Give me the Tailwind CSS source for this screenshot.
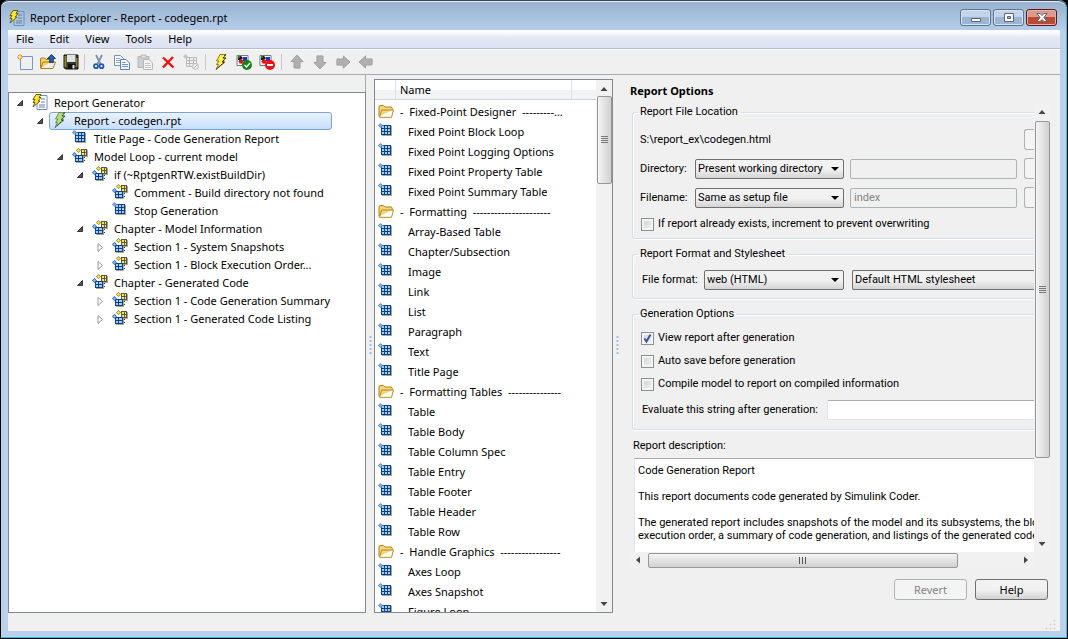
<!DOCTYPE html>
<html lang="en">
<head>
  <meta charset="UTF-8" />
  <title>Report Explorer - Report - codegen.rpt</title>
  <script src="https://cdn.jsdelivr.net/npm/@tailwindcss/browser@4"></script>
</head>
<body class="h-screen overflow-hidden bg-black font-['Noto_Sans',sans-serif] text-[11px] leading-4 text-black">

<!-- shared icons -->
<svg class="hidden">
  <defs>
    <linearGradient id="gFolder" x1="0" y1="0" x2="0" y2="1">
      <stop offset="0" stop-color="#fff3a8" /><stop offset="1" stop-color="#e9b83a" />
    </linearGradient>
    <linearGradient id="gPage" x1="0" y1="0" x2="1" y2="1">
      <stop offset="0" stop-color="#ffffff" /><stop offset="1" stop-color="#cfe0f5" />
    </linearGradient>
    <symbol id="grid" viewBox="0 0 16 16">
      <path d="M4 3h10v10H4z" fill="#a8a494" />
      <path d="M3 2h10v10H3z" fill="#123f80" />
      <path d="M4 3h2v2H4zM7 3h2v2H7zM10 3h2v2h-2zM4 6h2v2H4zM7 6h2v2H7zM10 6h2v2h-2zM4 9h2v2H4zM7 9h2v2H7zM10 9h2v2h-2z" fill="#9fd0fb" />
      <path d="M2.500 0L5 2.500 2.500 5 0 2.500z" fill="#2a62ad" stroke="#fff" stroke-width="0.400" />
      <path d="M2.500 1L4 2.500 2.500 4 1 2.500z" fill="#8cc4ff" />
    </symbol>
    <symbol id="group" viewBox="0 0 16 16">
      <path d="M10 2h6v7h-6zM4 8h8v7H4z" fill="#a8a494" />
      <path d="M9 1h6v7H9z" fill="#555" />
      <path d="M10 2h2v2h-2zM13 2h1v2h-1zM10 5h2v2h-2zM13 5h1v2h-1z" fill="#ffee35" />
      <path d="M6.500 0L9 2.500 6.500 5 4 2.500z" fill="#8a8432" />
      <path d="M6.500 0.900L8.100 2.500 6.500 4.100 4.900 2.500z" fill="#ffee35" />
      <path d="M3 7h8v7H3z" fill="#123f80" />
      <path d="M4 8h2v2H4zM7 8h3v2H7zM4 11h2v2H4zM7 11h3v2H7z" fill="#9fd0fb" />
      <path d="M2.500 4L5 6.500 2.500 9 0 6.500z" fill="#2a62ad" />
      <path d="M2.500 5L4 6.500 2.500 8 1 6.500z" fill="#8cc4ff" />
      <path d="M12 9h1v1h-1zM12 12h1v1h-1z" fill="#333" />
    </symbol>
    <symbol id="folder" viewBox="0 0 16 16">
      <path d="M1 13.500V4q0-1.500 1.500-1.500h3L7 4h6q1.200 0 1.200 1.200V7" fill="#f4d67a" stroke="#b08216" />
      <path d="M1.500 14.300L3.700 7H15.500L13.500 14.300z" fill="url(#gFolder)" stroke="#b98a1a" />
    </symbol>
    <symbol id="bolt" viewBox="0 0 16 16">
      <path d="M7 0.500h6L10.500 4H13L9.500 8H12L3 15.500 5.500 10.500H3.500L6 7H3.500z" fill="#fff04a" stroke="#8b7a1e" />
      <path d="M12.500 0.500L10 4h2.500L9 8h2.500L3.500 15" fill="none" stroke="#1c1a08" stroke-dasharray="2 1" />
    </symbol>
    <symbol id="boltsel" viewBox="0 0 16 16">
      <path d="M7 0.500h6L10.500 4H13L9.500 8H12L3 15.500 5.500 10.500H3.500L6 7H3.500z" fill="#b4dc7c" stroke="#6c8a62" />
      <path d="M12.500 0.500L10 4h2.500L9 8h2.500L3.500 15" fill="none" stroke="#26402c" stroke-dasharray="2 1" />
    </symbol>
    <symbol id="report" viewBox="0 0 16 16">
      <path d="M5 1.500h10v14H5z" fill="url(#gPage)" stroke="#6f8fb8" />
      <path d="M9 5h4M9 8h4M7 11h6M7 13h6" stroke="#6b7f9c" />
      <path d="M4 0.500h5L7 3.500h2L6 7h2L1 13 3 8.500H1L3 5.500H1z" fill="#ffe92e" stroke="#6e5b10" />
    </symbol>
    <symbol id="open" viewBox="0 0 16 16">
      <path d="M0.500 14V5q0-1 1-1h3L6 5.500h3.500V9" fill="#f3cf68" stroke="#b07e12" />
      <path d="M0.800 14.500L3 8h12.500L13 14.500z" fill="url(#gFolder)" stroke="#b07e12" />
      <path d="M11.500 0.500L15.500 4.500H13.300V8.500H9.700V4.500H7.500z" fill="#2a5ea5" stroke="#173a70" />
    </symbol>
    <symbol id="new" viewBox="0 0 16 16">
      <path d="M3.500 2.500h12v13h-12z" fill="url(#gPage)" stroke="#7397c6" />
      <path d="M3 0v6M0 3h6M1 1l4 4M5 1L1 5" stroke="#f09a3a" />
      <circle cx="3" cy="3" r="1.500" fill="#fff2c8" stroke="#f09a3a" stroke-width="0.500" />
    </symbol>
    <symbol id="save" viewBox="0 0 16 16">
      <path d="M1 1h14v14H2.500L1 13.500z" fill="#34342c" stroke="#111" />
      <path d="M4 1h8.500v7H4z" fill="#dfe3e8" />
      <path d="M1.500 2h2v11h-2zM13 4h1.500v9H13z" fill="#8a852a" />
      <path d="M5 10h7v5H5z" fill="#111" /><path d="M9.500 11h2v3.500h-2z" fill="#e8e8e8" />
    </symbol>
    <symbol id="cut" viewBox="0 0 16 16">
      <path d="M5 1l4.500 9M11 1L6.500 10" stroke="#7d92ac" stroke-width="1.800" fill="none" />
      <circle cx="5" cy="12.200" r="2" fill="none" stroke="#2459a8" stroke-width="1.800" />
      <circle cx="10.500" cy="12.200" r="2" fill="none" stroke="#2459a8" stroke-width="1.800" />
    </symbol>
    <symbol id="copy" viewBox="0 0 16 16">
      <path d="M0.500 1.500h6l3 3v7h-9z" fill="#f4f8fd" stroke="#7290bb" />
      <path d="M2 4.500h4M2 6.500h5M2 8.500h4" stroke="#8fa9cf" />
      <path d="M6.500 5.500h5.500l3.500 3.500v6.500h-9z" fill="#f4f8fd" stroke="#5f82b4" />
      <path d="M8 8.500h3.500M8 10.500h6M8 12.500h6" stroke="#7593c0" />
    </symbol>
    <symbol id="paste" viewBox="0 0 16 16">
      <path d="M1 2.500h11v11H1z" fill="#cfcfcf" stroke="#b5b5b5" />
      <path d="M4 1h5v3H4z" fill="#e6e6e6" stroke="#b5b5b5" />
      <path d="M6.500 5.500h5.500l3.500 3.500v6.500h-9z" fill="#f2f2f2" stroke="#b9b9b9" />
      <path d="M8 9.500h5M8 11.500h6M8 13.500h6" stroke="#c6c6c6" />
    </symbol>
    <symbol id="delete" viewBox="0 0 16 16">
      <path d="M3 3.500L13.500 13.500M13 3L3 13.500" stroke="#ee1111" stroke-width="2.400" fill="none" />
    </symbol>
    <symbol id="gridoff" viewBox="0 0 16 16">
      <path d="M3.500 3.500h10v9h-10zM3.500 6.500h10M3.500 9.500h10M6.500 3.500v9M10.500 3.500v9" stroke="#b9b9b9" fill="#efefef" />
      <path d="M2.500 0L5 2.500 2.500 5 0 2.500z" fill="#c4c4c4" />
      <circle cx="12.500" cy="12.500" r="3" fill="#efefef" stroke="#bdbdbd" /><path d="M10.500 14.500l4-4" stroke="#bdbdbd" />
    </symbol>
    <symbol id="model" viewBox="0 0 16 16">
      <path d="M1 1.500h11v10H1z" fill="#fff" stroke="#777" />
      <path d="M2 2h3l2 2-2 2H2z" fill="#161616" /><path d="M7 3h4v4H7z" fill="#2030c8" />
      <circle cx="5" cy="7.500" r="2.300" fill="#dd1515" /><path d="M2 2h2v2H2z" fill="#128a28" />
    </symbol>
    <symbol id="modelok" viewBox="0 0 16 16">
      <use href="#model" />
      <circle cx="11" cy="11" r="5" fill="#158215" /><path d="M8.500 11l2 2 3.500-4" stroke="#fff" stroke-width="1.500" fill="none" />
    </symbol>
    <symbol id="modelstop" viewBox="0 0 16 16">
      <use href="#model" />
      <circle cx="11" cy="11" r="5" fill="#ee1010" /><path d="M8 11h6" stroke="#fff" stroke-width="2" />
    </symbol>
    <symbol id="up" viewBox="0 0 16 16">
      <path d="M9 2l6 6.500h-3.500V15H6V8.500H3z" fill="#d6d6d6" />
      <path d="M8 1l6 6.500h-3V14H5V7.500H2z" fill="#b0b0b0" stroke="#a2a2a2" />
    </symbol>
  </defs>
</svg>

<div class="ml-px flex h-[calc(100vh-1px)] flex-col rounded-t-lg border-r border-b border-[#35bfe0] bg-[#b9d1ea] pr-[6px] pb-[6px] pl-[7px] mr-px">

  <!-- title bar -->
  <header class="-mr-[6px] -ml-[7px] flex h-[30px] shrink-0 items-center rounded-t-lg border-t border-[#3c4651] bg-linear-to-b from-[#98b2d0] to-[#b5cde8] pt-1 pr-[9px] pl-2 shadow-[inset_0_1px_0_#e5eef8]">
    <svg class="size-4 shrink-0"><use href="#report" /></svg>
    <h1 class="ml-[5px]">Report Explorer - Report - codegen.rpt</h1>
    <div class="ml-auto flex gap-[2px]">
      <button aria-label="Minimize" class="flex h-[17px] w-[31px] items-center justify-center rounded-[3px] border border-[#5c7290] bg-linear-to-b from-[#c3d4e8] from-50% to-[#9db5d0] to-50% shadow-[inset_0_0_0_1px_#d5e3f2]">
        <svg class="h-2.5 w-3" viewBox="0 0 12 10"><path d="M1.500 5.500h9v3h-9z" fill="#fff" stroke="#596478" /></svg>
      </button>
      <button aria-label="Maximize" class="flex h-[17px] w-[31px] items-center justify-center rounded-[3px] border border-[#5c7290] bg-linear-to-b from-[#c3d4e8] from-50% to-[#9db5d0] to-50% shadow-[inset_0_0_0_1px_#d5e3f2]">
        <svg class="h-2.5 w-3" viewBox="0 0 12 10"><path d="M1.500 0.500h9v8h-9z" fill="#fff" stroke="#596478" /><path d="M4.500 3.500h3v2h-3z" fill="#9db5d0" stroke="#596478" /></svg>
      </button>
      <button aria-label="Close" class="flex h-[17px] w-[31px] items-center justify-center rounded-[3px] border border-[#5a1a1e] bg-linear-to-b from-[#dc9a8c] from-50% to-[#bb4a34] to-50% shadow-[inset_0_0_0_1px_#e6b0a6]">
        <svg class="h-2.5 w-3" viewBox="0 0 12 10"><path d="M1 0.500h3L6 2.500 8 0.500h3L8 4.500 11 8.500H8L6 6.500 4 8.500H1L4 4.500z" fill="#fff" stroke="#596478" /></svg>
      </button>
    </div>
  </header>

  <div class="flex min-h-0 flex-1 flex-col bg-[#f0f0f0]">

    <!-- menu -->
    <nav class="flex h-[19px] shrink-0 items-center gap-4 border-b border-[#b6bccc] bg-linear-to-b from-white from-10% via-[#e4e9f4] via-40% to-[#dce2f3] px-2">
      <a href="#">File</a>
      <a href="#">Edit</a>
      <a href="#">View</a>
      <a href="#">Tools</a>
      <a href="#">Help</a>
    </nav>

    <!-- toolbar -->
    <div class="flex h-[26px] shrink-0 items-center border-t border-b border-t-white border-b-[#aaaaaa] pl-[5px]" role="toolbar">
      <button aria-label="New" class="flex w-[23px] justify-center"><svg class="size-4"><use href="#new" /></svg></button>
      <button aria-label="Open" class="flex w-[23px] justify-center"><svg class="size-4"><use href="#open" /></svg></button>
      <button aria-label="Save" class="flex w-[23px] justify-center"><svg class="size-4"><use href="#save" /></svg></button>
      <span class="mx-[2px] h-4 w-px bg-[#c8c8c8]"></span>
      <button aria-label="Cut" class="flex w-[23px] justify-center"><svg class="size-4"><use href="#cut" /></svg></button>
      <button aria-label="Copy" class="flex w-[23px] justify-center"><svg class="size-4"><use href="#copy" /></svg></button>
      <button aria-label="Paste" class="flex w-[23px] justify-center"><svg class="size-4"><use href="#paste" /></svg></button>
      <button aria-label="Delete" class="flex w-[23px] justify-center"><svg class="size-4"><use href="#delete" /></svg></button>
      <button aria-label="Deactivate" class="flex w-[23px] justify-center"><svg class="size-4"><use href="#gridoff" /></svg></button>
      <span class="mx-[3px] h-4 w-px bg-[#c8c8c8]"></span>
      <button aria-label="Run report" class="flex w-[23px] justify-center"><svg class="size-4"><use href="#bolt" /></svg></button>
      <button aria-label="Compile model" class="flex w-[23px] justify-center"><svg class="size-4"><use href="#modelok" /></svg></button>
      <button aria-label="Terminate model" class="flex w-[23px] justify-center"><svg class="size-4"><use href="#modelstop" /></svg></button>
      <span class="mx-[3px] h-4 w-px bg-[#c8c8c8]"></span>
      <button aria-label="Move up" class="flex w-[23px] justify-center"><svg class="size-4"><use href="#up" /></svg></button>
      <button aria-label="Move down" class="flex w-[23px] justify-center"><svg class="size-4 rotate-180"><use href="#up" /></svg></button>
      <button aria-label="Move right" class="flex w-[23px] justify-center"><svg class="size-4 rotate-90"><use href="#up" /></svg></button>
      <button aria-label="Move left" class="flex w-[23px] justify-center"><svg class="size-4 -rotate-90"><use href="#up" /></svg></button>
    </div>

    <main class="flex min-h-0 flex-1">

      <!-- outline tree -->
      <section class="mb-[18px] flex w-[358px] shrink-0 flex-col">
        <div class="h-[17px] shrink-0 border-r border-[#aaaaaa]"></div>
        <ul id="tree" class="flex-1 border border-[#828790] bg-white pt-px" role="tree"></ul>
      </section>

      <div class="flex w-2 shrink-0 items-center justify-center pb-4">
        <svg class="h-5 w-[3px]"><path d="M1.500 1v20" stroke="#9fbfe0" stroke-width="2" stroke-dasharray="2 2" /></svg>
      </div>

      <!-- component library -->
      <section class="mt-1 mb-[18px] flex w-[239px] shrink-0 border border-[#828790] bg-white">
        <div class="flex min-w-0 flex-1 flex-col overflow-hidden">
          <div class="flex h-5 shrink-0 items-center border-b border-[#d5d5d5] bg-linear-to-b from-white from-50% to-[#f2f3f5] to-50%">
            <div class="h-full w-[21px] border-r border-[#dedfe1]"></div>
            <div class="flex h-full flex-1 items-center border-r border-[#dedfe1] pt-px pl-1">Name</div>
            <div class="h-full w-[24px]"></div>
          </div>
          <ul id="library" class="min-h-0 flex-1 overflow-hidden pt-[2px]"></ul>
        </div>
        <div class="flex w-4 shrink-0 flex-col items-center bg-[#f1f1f1]">
          <svg class="h-4 w-4 shrink-0" viewBox="0 0 16 16"><path d="M4.500 11h7L8 7z" fill="#444" /></svg>
          <div class="flex h-[88px] w-[15px] items-center justify-center rounded-[2px] border border-[#979797] bg-linear-to-r from-[#f5f5f5] to-[#d0d0d0]">
            <svg class="h-2 w-[7px]" viewBox="0 0 7 8"><path d="M0 .5h7M0 2.500h7M0 4.500h7M0 6.500h7" stroke="#777" /></svg>
          </div>
          <svg class="mt-auto h-4 w-4 shrink-0" viewBox="0 0 16 16"><path d="M4.500 6h7L8 10z" fill="#444" /></svg>
        </div>
      </section>

      <div class="flex w-2 shrink-0 items-center justify-center pb-4">
        <svg class="h-5 w-[3px]"><path d="M1.500 1v20" stroke="#9fbfe0" stroke-width="2" stroke-dasharray="2 2" /></svg>
      </div>

      <!-- report options -->
      <section class="flex min-w-0 flex-1 flex-col pt-2 pr-[10px] pl-[9px] font-['Roboto',sans-serif]">
        <h2 class="font-['Noto_Sans',sans-serif] font-bold">Report Options</h2>

        <div class="mt-1 flex min-h-0 flex-1">
          <form class="min-w-0 flex-1 overflow-hidden pt-px pl-[2px]">

            <fieldset class="rounded-l-[3px] border border-r-0 border-[#d5dfe5] pt-[9px] pb-[6px] pl-[7px] shadow-[inset_1px_1px_0_white,0_1px_0_white]">
              <legend class="-ml-[2px] px-[2px]">Report File Location</legend>
              <div class="flex items-center">
                <span class="flex-1">S:\report_ex\codegen.html</span>
                <button type="button" aria-label="Edit location" class="h-[21px] w-[10px] rounded-l-[3px] border border-r-0 border-[#adb2b5] bg-[#f4f4f4]"></button>
              </div>
              <div class="mt-2 flex items-center">
                <label for="dir" class="w-[55px]">Directory:</label>
                <div class="relative w-[149px]">
                  <select id="dir" class="h-5 w-full appearance-none rounded-[2px] border border-[#707070] bg-linear-to-b from-[#f2f2f2] from-50% to-[#d4d4d4] pl-[2px]"><option>Present working directory</option></select>
                  <svg class="pointer-events-none absolute top-2 right-[5px] h-1 w-2" viewBox="0 0 8 4"><path d="M0 0h8L4 4z" /></svg>
                </div>
                <input aria-label="Directory path" disabled class="mr-[7px] ml-[6px] h-5 min-w-0 flex-1 rounded-[2px] border border-[#adb2b5] bg-[#f0f0f0] px-[3px]" />
                <button type="button" aria-label="Browse" class="h-[21px] w-[10px] rounded-l-[3px] border border-r-0 border-[#adb2b5] bg-[#f4f4f4]"></button>
              </div>
              <div class="mt-2 flex items-center">
                <label for="fname" class="w-[55px]">Filename:</label>
                <div class="relative w-[149px]">
                  <select id="fname" class="h-5 w-full appearance-none rounded-[2px] border border-[#707070] bg-linear-to-b from-[#f2f2f2] from-50% to-[#d4d4d4] pl-[2px]"><option>Same as setup file</option></select>
                  <svg class="pointer-events-none absolute top-2 right-[5px] h-1 w-2" viewBox="0 0 8 4"><path d="M0 0h8L4 4z" /></svg>
                </div>
                <input aria-label="File name" disabled value="index" class="mr-[7px] ml-[6px] h-5 min-w-0 flex-1 rounded-[2px] border border-[#adb2b5] bg-[#f0f0f0] px-[3px] text-[#838383]" />
                <button type="button" aria-label="Browse file" class="h-[21px] w-[10px] rounded-l-[3px] border border-r-0 border-[#adb2b5] bg-[#f4f4f4]"></button>
              </div>
              <label class="mt-2 ml-px flex items-center gap-1 whitespace-nowrap">
                <input type="checkbox" class="size-[13px] appearance-none border border-[#8e8f8f] bg-linear-to-br from-[#cdd0d4] to-[#f6f6f6] shadow-[inset_0_0_0_2px_#f4f4f4]" />
                If report already exists, increment to prevent overwriting
              </label>
            </fieldset>

            <fieldset class="mt-[7px] rounded-l-[3px] border border-r-0 border-[#d5dfe5] pt-2 pb-2 pl-[9px] shadow-[inset_1px_1px_0_white,0_1px_0_white]">
              <legend class="-ml-1 px-[2px]">Report Format and Stylesheet</legend>
              <div class="flex items-center">
                <label for="fmt" class="w-[62px]">File format:</label>
                <div class="relative w-[140px]">
                  <select id="fmt" class="h-5 w-full appearance-none rounded-[2px] border border-[#707070] bg-linear-to-b from-[#f2f2f2] from-50% to-[#d4d4d4] pl-[2px]"><option>web (HTML)</option></select>
                  <svg class="pointer-events-none absolute top-2 right-[5px] h-1 w-2" viewBox="0 0 8 4"><path d="M0 0h8L4 4z" /></svg>
                </div>
                <select aria-label="Stylesheet" class="ml-2 h-5 min-w-0 flex-1 appearance-none rounded-l-[2px] border border-r-0 border-[#707070] bg-linear-to-b from-[#f2f2f2] from-50% to-[#d4d4d4] pl-[2px]"><option>Default HTML stylesheet</option></select>
              </div>
            </fieldset>

            <fieldset class="mt-[7px] rounded-l-[3px] border border-r-0 border-[#d5dfe5] pt-2 pb-[9px] pl-2 shadow-[inset_1px_1px_0_white,0_1px_0_white]">
              <legend class="-ml-[3px] px-[2px]">Generation Options</legend>
              <div class="flex flex-col gap-[7px]">
                <label class="flex items-center gap-1">
                  <span class="relative flex">
                    <input type="checkbox" checked class="size-[13px] appearance-none border border-[#8e8f8f] bg-linear-to-br from-[#cdd0d4] to-[#f6f6f6] shadow-[inset_0_0_0_2px_#f4f4f4]" />
                    <svg class="pointer-events-none absolute inset-0 size-[13px]" viewBox="0 0 13 13"><path d="M3.500 6.500L5.500 9.500 9.500 2.500" fill="none" stroke="#40549e" stroke-width="2" /></svg>
                  </span>
                  View report after generation
                </label>
                <label class="flex items-center gap-1">
                  <input type="checkbox" class="size-[13px] appearance-none border border-[#8e8f8f] bg-linear-to-br from-[#cdd0d4] to-[#f6f6f6] shadow-[inset_0_0_0_2px_#f4f4f4]" />
                  Auto save before generation
                </label>
                <label class="flex items-center gap-1">
                  <input type="checkbox" class="size-[13px] appearance-none border border-[#8e8f8f] bg-linear-to-br from-[#cdd0d4] to-[#f6f6f6] shadow-[inset_0_0_0_2px_#f4f4f4]" />
                  Compile model to report on compiled information
                </label>
              </div>
              <div class="mt-2 ml-px flex items-center">
                <label for="evalstr" class="w-[185px] whitespace-nowrap">Evaluate this string after generation:</label>
                <input id="evalstr" class="h-5 min-w-0 flex-1 rounded-l-[2px] border border-r-0 border-[#e2e3ea] border-t-[#abadb3] bg-white px-[3px]" />
              </div>
            </fieldset>

            <label for="desc" class="mt-2 ml-px block">Report description:</label>
            <textarea id="desc" wrap="off" class="mt-1 ml-[2px] block h-[110px] w-full resize-none overflow-hidden border border-[#e2e3ea] border-t-[#abadb3] bg-white px-[3px] pt-[5px] leading-[13px] whitespace-pre">Code Generation Report

This report documents code generated by Simulink Coder.

The generated report includes snapshots of the model and its subsystems, the block
execution order, a summary of code generation, and listings of the generated code.</textarea>
          </form>

          <div class="flex w-4 shrink-0 flex-col items-center bg-[#f1f1f1]">
            <svg class="h-[18px] w-4 shrink-0" viewBox="0 0 16 18"><path d="M4.500 11h7L8 7z" fill="#444" /></svg>
            <div class="flex h-[337px] w-[15px] shrink-0 items-center justify-center rounded-[2px] border border-[#979797] bg-linear-to-r from-[#f5f5f5] to-[#d0d0d0]">
              <svg class="h-2 w-[7px]" viewBox="0 0 7 8"><path d="M0 .5h7M0 2.500h7M0 4.500h7M0 6.500h7" stroke="#777" /></svg>
            </div>
            <svg class="mt-auto h-4 w-4 shrink-0" viewBox="0 0 16 16"><path d="M4.500 6h7L8 10z" fill="#444" /></svg>
          </div>
        </div>

        <div class="mr-4 flex h-4 shrink-0 items-center bg-[#f1f1f1]">
          <svg class="h-4 w-[18px] shrink-0" viewBox="0 0 18 16"><path d="M10 4.500v7L6 8z" fill="#444" /></svg>
          <div class="flex h-[15px] w-[310px] items-center justify-center rounded-[2px] border border-[#979797] bg-linear-to-b from-[#f5f5f5] to-[#d0d0d0]">
            <svg class="h-[7px] w-2" viewBox="0 0 8 7"><path d="M.5 0v7M3.500 0v7M6.500 0v7" stroke="#555" /></svg>
          </div>
          <svg class="ml-auto h-4 w-4 shrink-0" viewBox="0 0 16 16"><path d="M6 4.500v7L10 8z" fill="#444" /></svg>
        </div>

        <div class="mt-[11px] mr-[2px] flex shrink-0 justify-end gap-2">
          <button disabled class="h-[21px] w-[73px] rounded-[3px] border border-[#adb2b5] bg-[#f4f4f4] font-['Noto_Sans',sans-serif] text-[#838383]">Revert</button>
          <button class="h-[21px] w-[73px] rounded-[3px] border border-[#707070] bg-linear-to-b from-[#f2f2f2] from-50% to-[#d2d2d2] font-['Noto_Sans',sans-serif]">Help</button>
        </div>
        <div class="-mr-[7px] flex h-[31px] shrink-0 items-end justify-end">
          <svg class="size-3" viewBox="0 0 12 12"><path d="M9 1h1v1H9zM9 5h1v1H9zM5 5h1v1H5zM9 9h1v1H9zM5 9h1v1H5zM1 9h1v1H1z" fill="#9c9c9c" stroke="#d8d8d8" /></svg>
        </div>
      </section>
    </main>
  </div>
</div>

<script>
  const tree = [
    { depth: 0, state: "open", icon: "report", text: "Report Generator" },
    { depth: 1, state: "open", icon: "boltsel", text: "Report - codegen.rpt", selected: true },
    { depth: 2, icon: "grid", text: "Title Page - Code Generation Report" },
    { depth: 2, state: "open", icon: "group", text: "Model Loop - current model" },
    { depth: 3, state: "open", icon: "group", text: "if (~RptgenRTW.existBuildDir)" },
    { depth: 4, icon: "group", text: "Comment - Build directory not found" },
    { depth: 4, icon: "grid", text: "Stop Generation" },
    { depth: 3, state: "open", icon: "group", text: "Chapter - Model Information" },
    { depth: 4, state: "closed", icon: "group", text: "Section 1 - System Snapshots" },
    { depth: 4, state: "closed", icon: "group", text: "Section 1 - Block Execution Order..." },
    { depth: 3, state: "open", icon: "group", text: "Chapter - Generated Code" },
    { depth: 4, state: "closed", icon: "group", text: "Section 1 - Code Generation Summary" },
    { depth: 4, state: "closed", icon: "group", text: "Section 1 - Generated Code Listing" }
  ];

  const arrows = {
    open: '<path d="M6.500 1.500V6.500H1.500z" fill="#555" stroke="#333" />',
    closed: '<path d="M2 0.500L6.500 4.500 2 8.500z" fill="#fff" stroke="#999" />'
  };

  tree.forEach(t => {
    document.getElementById("tree").innerHTML += `
      <li class="flex h-[18px] items-center" role="treeitem" style="padding-left:${7 + t.depth * 20}px">
        <svg class="h-[9px] w-2 shrink-0" viewBox="0 0 8 9">${arrows[t.state] || ''}</svg>
        <div class="ml-[5px] flex h-[18px] items-center gap-[6px] border pl-[2px] ${t.selected ? 'w-[283px] rounded-[3px] border-[#7da2ce] bg-linear-to-b from-[#eaf3fd] to-[#c6defb]' : 'border-transparent'}">
          <svg class="mb-[2px] size-4 shrink-0"><use href="#${t.icon}" /></svg>
          <span class="whitespace-nowrap">${t.text}</span>
        </div>
      </li>`;
  });

  const library = [
    { folder: "-  Fixed-Point Designer  ---------..." },
    "Fixed Point Block Loop", "Fixed Point Logging Options", "Fixed Point Property Table", "Fixed Point Summary Table",
    { folder: "-  Formatting  ----------------------" },
    "Array-Based Table", "Chapter/Subsection", "Image", "Link", "List", "Paragraph", "Text", "Title Page",
    { folder: "-  Formatting Tables  ---------------" },
    "Table", "Table Body", "Table Column Spec", "Table Entry", "Table Footer", "Table Header", "Table Row",
    { folder: "-  Handle Graphics  -----------------" },
    "Axes Loop", "Axes Snapshot", "Figure Loop"
  ];

  library.forEach(item => {
    document.getElementById("library").innerHTML += item.folder
      ? `<li class="flex h-5 items-center gap-[6px] pl-[3px]"><svg class="mb-[2px] size-4 shrink-0"><use href="#folder" /></svg><span class="whitespace-pre">${item.folder}</span></li>`
      : `<li class="flex h-5 items-center gap-[14px] pl-[3px]"><svg class="mb-[2px] size-4 shrink-0"><use href="#grid" /></svg><span class="whitespace-nowrap">${item}</span></li>`;
  });
</script>

</body>
</html>
